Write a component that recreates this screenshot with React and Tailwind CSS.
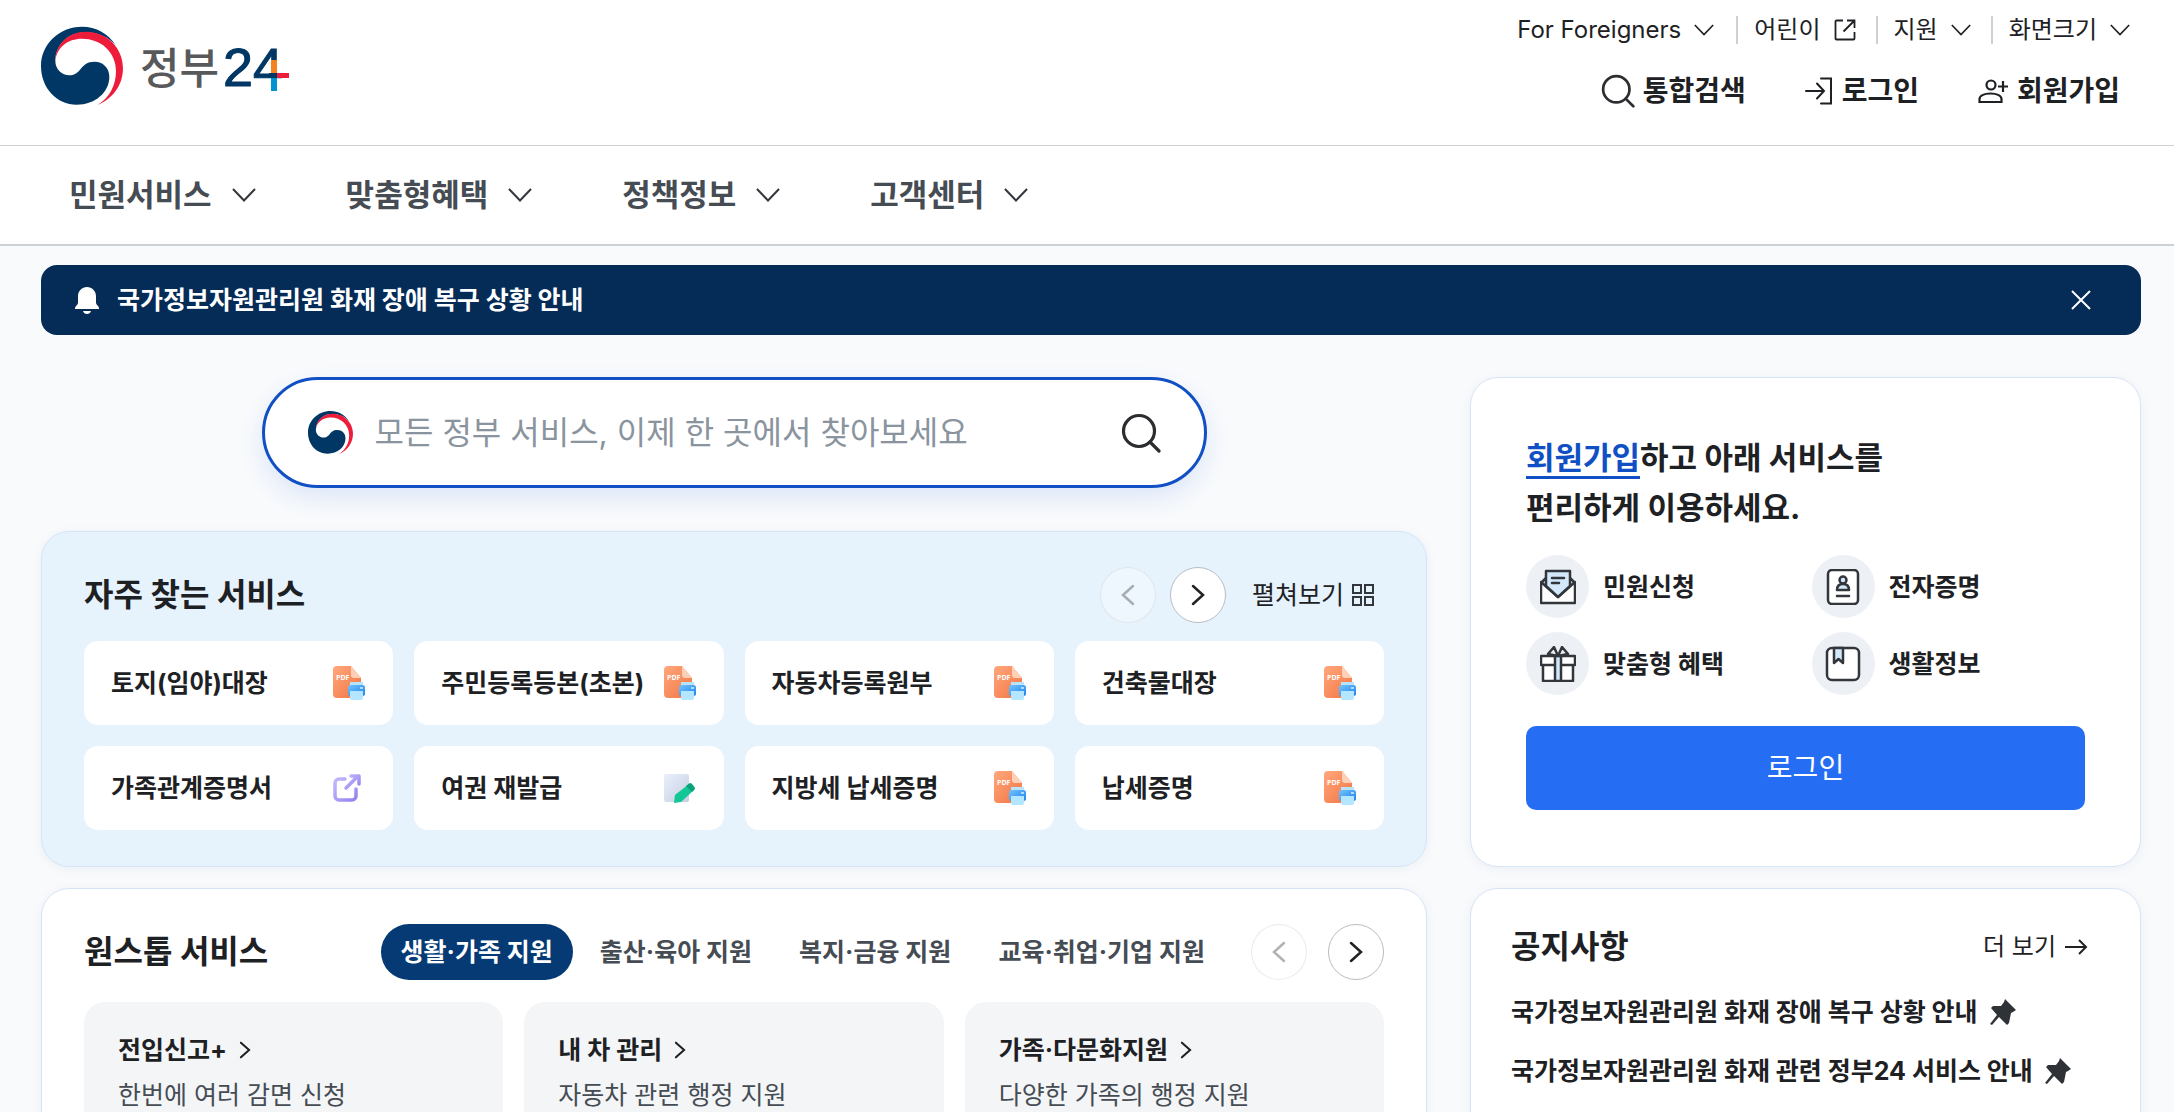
import { useState } from 'react';

const FONT = "font-['Inter','Noto_Sans_CJK_KR',sans-serif]";

const menus = ['민원서비스', '맞춤형혜택', '정책정보', '고객센터'];

const services = [
  { name: '토지(임야)대장', type: 'pdf' },
  { name: '주민등록등본(초본)', type: 'pdf' },
  { name: '자동차등록원부', type: 'pdf' },
  { name: '건축물대장', type: 'pdf' },
  { name: '가족관계증명서', type: 'link' },
  { name: '여권 재발급', type: 'pen' },
  { name: '지방세 납세증명', type: 'pdf' },
  { name: '납세증명', type: 'pdf' },
];

const tabs = ['생활·가족 지원', '출산·육아 지원', '복지·금융 지원', '교육·취업·기업 지원'];

const oneStop = [
  { title: '전입신고+', desc: '한번에 여러 감면 신청' },
  { title: '내 차 관리', desc: '자동차 관련 행정 지원' },
  { title: '가족·다문화지원', desc: '다양한 가족의 행정 지원' },
];

const notices = [
  '국가정보자원관리원 화재 장애 복구 상황 안내',
  '국가정보자원관리원 화재 관련 정부24 서비스 안내',
];

const EmblemShape = () => (
  <>
    <path
      fill="#003764"
      d="M258 92C236 56 198 35 156 35C88 35 33 87 33 153C33 219 80 269 140 269C195 269 238 232 238 185C238 158 218 140 194 140C170 140 162 150 150 164C142 174 132 181 118 181C96 181 76 163 76 138C76 95 110 52 165 52C205 52 238 68 258 92Z"
    />
    <path
      fill="#ee1c3b"
      d="M76 138C76 88 115 50 168 50C232 50 279 100 279 160C279 210 248 252 203 270C238 248 258 212 258 168C258 112 214 71 156 71C112 71 80 98 76 138Z"
    />
  </>
);

const Emblem = ({ className }) => (
  <svg viewBox="33 35 246 236" className={className} aria-hidden="true">
    <EmblemShape />
  </svg>
);

const Logo = () => (
  <svg viewBox="0 0 250 80" className="h-20 w-[250px] overflow-visible" role="img" aria-label="정부24">
    <g transform="translate(-11 -12) scale(0.3333)">
      <EmblemShape />
    </g>
    <text x="99" y="57" fontSize="43" fontWeight="500" fill="#58595b" className="font-['Noto_Sans_CJK_KR',sans-serif]">정부</text>
    <text x="182" y="59" fontSize="54" fill="#003764" stroke="#003764" strokeWidth="1" className="font-['Liberation_Sans',sans-serif]">24</text>
    <path fill="#f58220" d="M230 33h6v13h-6z" />
    <path fill="#003764" d="M228 46h8v5h-8z" />
    <path fill="#0093d0" d="M230 51h6v13h-6z" />
    <path fill="#ee1c3b" d="M236 46h12v5h-12z" />
  </svg>
);

const ChevronDown = ({ className }) => (
  <svg viewBox="0 0 24 14" fill="none" stroke="currentColor" strokeWidth="2" className={className} aria-hidden="true">
    <path d="M1 1l11 11.500L23 1" />
  </svg>
);

const ChevronRight = ({ className, flip }) => (
  <svg viewBox="0 0 14 22" fill="none" stroke="currentColor" strokeWidth="2.500" strokeLinecap="round" className={className} aria-hidden="true">
    <path d={flip ? 'M12 2L2 11l10 9' : 'M2 2l10 9L2 20'} />
  </svg>
);

const SearchIcon = ({ className }) => (
  <svg viewBox="0 0 40 40" fill="none" stroke="#2b2d30" strokeWidth="3.200" strokeLinecap="round" className={className} aria-hidden="true">
    <circle cx="18" cy="18" r="15.500" />
    <path d="M29 29l9 9" />
  </svg>
);

const PdfIcon = () => (
  <svg viewBox="0 0 34 36" className="h-9 w-[34px]" aria-hidden="true">
    <defs>
      <linearGradient id="pdfBody" x1="0" y1="0" x2="1" y2="1">
        <stop offset="0" stopColor="#ffa87c" />
        <stop offset="1" stopColor="#f37443" />
      </linearGradient>
      <linearGradient id="printer" x1="0" y1="0" x2="1" y2="1">
        <stop offset="0" stopColor="#74c3fc" />
        <stop offset="1" stopColor="#1a83f0" />
      </linearGradient>
    </defs>
    <path fill="url(#pdfBody)" d="M5 1h14l10 12v16a4 4 0 0 1-4 4H5a4 4 0 0 1-4-4V5a4 4 0 0 1 4-4z" />
    <path fill="#ffd0b8" d="M19 1l10 12h-7a3 3 0 0 1-3-3z" />
    <text x="4" y="15" fontSize="7" fontWeight="700" fill="#fff" className="font-['Open_Sans',sans-serif]">PDF</text>
    <path fill="#b9e3fb" d="M18 17h13v4H18z" />
    <rect x="16" y="20" width="17" height="11" rx="2.500" fill="url(#printer)" />
    <path stroke="#fff" strokeWidth="1.200" d="M28 23h3" />
    <path fill="#b5e6ff" d="M18 26h13v7a2 2 0 0 1-2 2h-9a2 2 0 0 1-2-2z" />
  </svg>
);

const LinkIcon = () => (
  <svg viewBox="0 0 34 36" className="h-9 w-[34px]" fill="none" stroke="url(#linkStroke)" strokeWidth="3.500" strokeLinecap="round" strokeLinejoin="round" aria-hidden="true">
    <defs>
      <linearGradient id="linkStroke" x1="0" y1="0" x2="1" y2="1">
        <stop offset="0" stopColor="#c3b8fb" />
        <stop offset="1" stopColor="#9583ee" />
      </linearGradient>
    </defs>
    <path d="M13 9H7a4 4 0 0 0-4 4v13a4 4 0 0 0 4 4h13a4 4 0 0 0 4-4v-7" />
    <path d="M14 18L25 7M19 6h8v8" />
  </svg>
);

const PenIcon = () => (
  <svg viewBox="0 0 34 36" className="h-9 w-[34px]" aria-hidden="true">
    <defs>
      <linearGradient id="paper" x1="0" y1="0" x2="1" y2="1">
        <stop offset="0" stopColor="#eaf0fb" />
        <stop offset="1" stopColor="#c5cfe2" />
      </linearGradient>
    </defs>
    <rect x="1" y="4" width="25" height="28" rx="2" fill="url(#paper)" />
    <path fill="#12c795" d="M11 33l1-8 14-11 5 6-13 12z" />
    <path fill="#0aa378" d="M23 16l3-2.500a2 2 0 0 1 2.500 0l3 3.500a2 2 0 0 1 0 2.500L29 22z" />
  </svg>
);

const icons = { pdf: PdfIcon, link: LinkIcon, pen: PenIcon };

const lineIcon = { viewBox: '0 0 36 36', className: 'size-9', fill: 'none', stroke: '#33363b', strokeWidth: 2.5, strokeLinejoin: 'round', 'aria-hidden': true };

const MailIcon = () => (
  <svg {...lineIcon}>
    <path fill="#fff" d="M1 13v21h34V13L18 28z" />
    <path d="M6 9l-5 5M30 9l5 5" />
    <path fill="#d3e9fb" d="M6 2h24v15L18 28 6 17z" />
    <path strokeLinecap="round" d="M12 9h12M12 14h7" />
  </svg>
);

const CertIcon = () => (
  <svg {...lineIcon}>
    <rect x="3" y="1" width="30" height="34" rx="4" fill="#fff" />
    <circle cx="18" cy="11" r="3.500" fill="#d3e9fb" />
    <path fill="#d3e9fb" d="M12 21c0-4 2-6 6-6s6 2 6 6z" />
    <path strokeLinecap="round" d="M12 27h12" />
  </svg>
);

const GiftIcon = () => (
  <svg {...lineIcon}>
    <path fill="#fff" d="M3 19h30v16H3zM1 10h34v9H1z" />
    <path fill="#d3e9fb" d="M15 10h6v25h-6z" />
    <path d="M18 10L14 1l-6 7zM18 10l4-9 6 7z" />
  </svg>
);

const BookIcon = () => (
  <svg {...lineIcon}>
    <rect x="2" y="2" width="32" height="32" rx="5" fill="#fff" />
    <path fill="#d3e9fb" d="M9 2h9v15l-4.500-4L9 17z" />
  </svg>
);

const benefits = [
  { label: '민원신청', Icon: MailIcon },
  { label: '전자증명', Icon: CertIcon },
  { label: '맞춤형 혜택', Icon: GiftIcon },
  { label: '생활정보', Icon: BookIcon },
];

const PinIcon = () => (
  <svg viewBox="0 0 26 26" className="size-[26px] shrink-0" fill="#2f3338" aria-hidden="true">
    <path d="M15 0l11 11-3 2-2 1-2 10-2 2-8-8-7 8-2-1 7-9-6-7 2-2 8 0 3-4z" />
  </svg>
);

const RoundButton = ({ prev }) => (
  <button
    type="button"
    disabled={prev}
    aria-label={prev ? '이전' : '다음'}
    className="flex size-14 shrink-0 items-center justify-center rounded-full border border-[#b8bcc2] bg-white text-[#222] disabled:border-[#b8bcc2]/30 disabled:bg-white/35 disabled:text-[#222]/35"
  >
    <ChevronRight flip={prev} className="h-[22px] w-[14px]" />
  </button>
);

const Header = () => (
  <header className="bg-white">
    <div className="flex h-[146px] items-start justify-between border-b border-[#cdd1d5] pr-11 pl-[41px]">
      <a href="#home" className="mt-[27px]">
        <Logo />
      </a>
      <div className="pt-4">
        <ul className="flex items-center justify-end text-2xl leading-7">
          <li>
            <button type="button" className="flex items-center gap-[13px]">
              For Foreigners <ChevronDown className="h-3 w-5" />
            </button>
          </li>
          <li className="ml-[22px] border-l-2 border-[#cdd1d5] pl-4">
            <a href="#kids" className="flex items-center gap-[13px]">
              어린이
              <svg viewBox="0 0 22 22" className="size-[22px]" fill="none" stroke="currentColor" strokeWidth="1.800" aria-hidden="true">
                <path d="M9 1.500H2.500a1 1 0 0 0-1 1v17a1 1 0 0 0 1 1h17a1 1 0 0 0 1-1V13M13 1.500h7.500V9M20.500 1.500L9.500 12.500" />
              </svg>
            </a>
          </li>
          <li className="ml-5 border-l-2 border-[#cdd1d5] pl-4">
            <button type="button" className="flex items-center gap-[13px]">
              지원 <ChevronDown className="h-3 w-5" />
            </button>
          </li>
          <li className="ml-5 border-l-2 border-[#cdd1d5] pl-4">
            <button type="button" className="flex items-center gap-[13px]">
              화면크기 <ChevronDown className="h-3 w-5" />
            </button>
          </li>
        </ul>
        <div className="mt-[27px] flex justify-end gap-[58px] pr-[10px] text-[28px] leading-10 font-bold">
          <button type="button" className="flex items-center gap-2">
            <SearchIcon className="size-[34px]" />
            통합검색
          </button>
          <a href="#login" className="flex items-center gap-2">
            <svg viewBox="0 0 30 28" className="h-7 w-[30px]" fill="none" stroke="currentColor" strokeWidth="2" strokeLinecap="round" aria-hidden="true">
              <path d="M2 14h18M13 6.500l7 7.500-7 7.500M17 1.500h10v25H17" />
            </svg>
            로그인
          </a>
          <a href="#join" className="flex items-center gap-2">
            <svg viewBox="0 0 32 28" className="h-7 w-8" fill="none" stroke="currentColor" strokeWidth="2.200" aria-hidden="true">
              <circle cx="14" cy="8" r="4.500" />
              <path d="M2.500 25v-3c0-3 4-5.500 11-5.500S24.500 19 24.500 22v3zM26 4v11M21 9.500h10" />
            </svg>
            회원가입
          </a>
        </div>
      </div>
    </div>
    <nav className="border-b-2 border-[#cdd1d5] px-[69px]">
      <ul className="flex h-[98px] items-center gap-[90px]">
        {menus.map((menu) => (
          <li key={menu}>
            <button type="button" className="flex items-center gap-5 text-[31px] leading-[44px] font-bold text-[#464c53]">
              {menu}
              <ChevronDown className="h-[14px] w-6 text-[#33363b]" />
            </button>
          </li>
        ))}
      </ul>
    </nav>
  </header>
);

const NoticeBar = () => (
  <div className="flex h-[70px] items-center rounded-2xl bg-[#052b57] px-[34px] text-white">
    <svg viewBox="0 0 24 27" className="h-[27px] w-6" fill="currentColor" aria-hidden="true">
      <path d="M12 0c5 0 9 4 9 9v7c0 2 3 3 3 5v1H0v-1c0-2 3-3 3-5V9c0-5 4-9 9-9zM8 24h8c-.500 2-2 3-4 3s-3.500-1-4-3z" />
    </svg>
    <a href="#notice" className="ml-[18px] text-[25px] leading-9 font-bold">{notices[0]}</a>
    <button type="button" aria-label="닫기" className="mr-4 ml-auto">
      <svg viewBox="0 0 20 20" className="size-5" stroke="currentColor" strokeWidth="2" aria-hidden="true">
        <path d="M1 1l18 18M19 1L1 19" />
      </svg>
    </button>
  </div>
);

const Search = () => (
  <form className="mx-auto flex h-[111px] w-full max-w-[945px] items-center rounded-full border-3 border-[#1150c4] bg-white px-[43px] shadow-[0_10px_24px_rgba(30,90,220,0.12)]">
    <Emblem className="size-[45px] shrink-0" />
    <input
      type="text"
      aria-label="통합검색"
      placeholder="모든 정부 서비스, 이제 한 곳에서 찾아보세요"
      className="ml-[22px] min-w-0 flex-1 text-[32px] leading-[44px] outline-none placeholder:text-[#8a949e]"
    />
    <button type="submit" aria-label="검색">
      <SearchIcon className="size-10" />
    </button>
  </form>
);

const card = 'border border-[#d6e4f7] rounded-[28px] shadow-[0_2px_12px_rgba(20,50,100,0.05)]';

const Frequent = () => (
  <section className={`${card} bg-[#e6f3fd] px-[42px] pt-[35px] pb-9`}>
    <div className="flex items-center">
      <h2 className="text-[32px] leading-[44px] font-bold">자주 찾는 서비스</h2>
      <div className="ml-auto flex gap-[14px]">
        <RoundButton prev />
        <RoundButton />
      </div>
      <button type="button" className="ml-[26px] flex items-center gap-2 pr-[10px] text-[25px] leading-9">
        펼쳐보기
        <svg viewBox="0 0 22 22" className="size-[22px]" fill="none" stroke="#33363b" strokeWidth="2" aria-hidden="true">
          <path d="M1 1h8v8H1zM13 1h8v8h-8zM1 13h8v8H1zM13 13h8v8h-8z" />
        </svg>
      </button>
    </div>
    <ul className="mt-[18px] grid grid-cols-4 gap-[21px]">
      {services.map(({ name, type }) => {
        const Icon = icons[type];
        return (
          <li key={name}>
            <a href="#service" className="flex h-[84px] items-center justify-between rounded-[14px] bg-white px-[27px] text-[25px] leading-9 font-bold">
              {name}
              <Icon />
            </a>
          </li>
        );
      })}
    </ul>
  </section>
);

const OneStop = () => {
  const [active, setActive] = useState(0);

  return (
    <section className={`${card} bg-white px-[42px] pt-[35px] pb-10`}>
      <div className="flex items-center">
        <h2 className="text-[32px] leading-[44px] font-bold">원스톱 서비스</h2>
        <div role="tablist" className="mr-[26px] ml-auto flex gap-[7px]">
          {tabs.map((tab, i) => (
            <button
              key={tab}
              type="button"
              role="tab"
              aria-selected={active === i}
              onClick={() => setActive(i)}
              className={`h-14 rounded-full px-5 text-[25px] leading-9 font-bold ${
                active === i ? 'bg-[#053a75] text-white' : 'text-[#464c53]'
              }`}
            >
              {tab}
            </button>
          ))}
        </div>
        <div className="flex gap-[21px]">
          <RoundButton prev />
          <RoundButton />
        </div>
      </div>
      <ul className="mt-[22px] grid grid-cols-3 gap-[21px]">
        {oneStop.map(({ title, desc }) => (
          <li key={title} className="rounded-[21px] bg-[#f3f5f7] px-[34px] pt-[30px] pb-16">
            <a href="#onestop" className="flex items-center gap-3 text-[25px] leading-9 font-bold">
              {title}
              <ChevronRight className="h-[18px] w-3" />
            </a>
            <p className="mt-[9px] text-[25px] leading-9 text-[#464c53]">{desc}</p>
          </li>
        ))}
      </ul>
    </section>
  );
};

const LoginCard = () => (
  <section className={`${card} bg-white px-[55px] pt-[55px] pb-14`}>
    <h2 className="text-[31px] leading-[50px] font-bold">
      <a href="#join" className="border-b-3 border-[#1150c4] text-[#1150c4]">회원가입</a>하고 아래 서비스를
      <br />
      편리하게 이용하세요.
    </h2>
    <ul className="mt-[22px] grid grid-cols-2 gap-x-3 gap-y-[14px]">
      {benefits.map(({ label, Icon }) => (
        <li key={label} className="flex items-center gap-[14px] text-[25px] leading-9 font-bold">
          <span className="flex size-[63px] items-center justify-center rounded-full bg-[#edf1f6]">
            <Icon />
          </span>
          {label}
        </li>
      ))}
    </ul>
    <button type="button" className="mt-[31px] h-[84px] w-full rounded-[10px] bg-[#256ef4] text-[28px] leading-10 text-white">
      로그인
    </button>
  </section>
);

const Notices = () => (
  <section className={`${card} bg-white px-10 pt-9`}>
    <div className="flex items-center justify-between">
      <h2 className="text-[32px] leading-[44px] font-bold">공지사항</h2>
      <a href="#more" className="flex items-center gap-2 pr-3 text-2xl leading-9">
        더 보기
        <svg viewBox="0 0 24 18" className="h-[18px] w-6" fill="none" stroke="#222" strokeWidth="2" aria-hidden="true">
          <path d="M1 9h21M15 2l7 7-7 7" />
        </svg>
      </a>
    </div>
    <ul className="mt-[25px] space-y-[23px]">
      {notices.map((notice) => (
        <li key={notice}>
          <a href="#notice" className="flex items-center gap-3 text-[25px] leading-9 font-bold">
            <span>{notice}</span>
            <PinIcon />
          </a>
        </li>
      ))}
    </ul>
  </section>
);

const App = () => (
  <div className={`h-screen overflow-hidden bg-[#f8fafc] text-[#1e2124] ${FONT}`}>
    <Header />
    <main className="pt-[19px] pr-[33px] pl-[41px]">
      <NoticeBar />
      <div className="mt-[42px] grid grid-cols-[1386fr_671fr] gap-x-[43px] gap-y-[21px]">
        <div className="flex flex-col gap-[43px]">
          <Search />
          <Frequent />
        </div>
        <LoginCard />
        <OneStop />
        <Notices />
      </div>
    </main>
  </div>
);

export default App;
